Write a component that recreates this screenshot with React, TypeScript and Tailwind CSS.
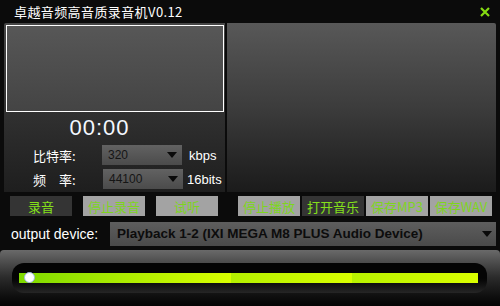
import React from "react";

const cjk = { fontFamily: '"Noto Sans CJK SC", "Noto Sans", sans-serif' };
const lib = { fontFamily: '"Liberation Sans", Arial, sans-serif' };

function Btn({ label, dark, className }: { label: string; dark?: boolean; className?: string }) {
  return (
    <div
      className={`h-[20px] w-[62px] flex items-center justify-center text-[13px] leading-none ${
        dark ? "bg-[#343434] text-[#84e01a]" : "bg-[#a3a3a3] text-[#7ed51e]"
      } ${className ?? ""}`}
      style={cjk}
    >
      {label}
    </div>
  );
}

function Select({ value }: { value: string }) {
  return (
    <div className="h-[20px] w-[80px] flex items-center justify-between pl-[6px] pr-[5px] bg-gradient-to-b from-[#626262] to-[#4b4b4b]">
      <span className="text-[12px] text-[#151515] leading-none" style={lib}>
        {value}
      </span>
      <svg width="10" height="6" viewBox="0 0 10 6">
        <polygon points="0,0 10,0 5,6" fill="#0a0a0a" />
      </svg>
    </div>
  );
}

export default function App() {
  return (
    <div className="w-[500px] h-[306px] bg-[#0b0b0b] flex flex-col overflow-hidden select-none">
      {/* title bar */}
      <div className="h-[23px] flex items-center justify-between pl-[14px] pr-[10px] shrink-0">
        <span className="text-white text-[13px] leading-none tracking-[0.4px]" style={cjk}>
          卓越音频高音质录音机V0.12
        </span>
        <svg width="10" height="10" viewBox="0 0 10 10">
          <path d="M1 1 L9 9 M9 1 L1 9" stroke="#86dc12" strokeWidth="2.2" />
        </svg>
      </div>

      {/* panels */}
      <div className="h-[169px] flex pl-[4px] pr-[4px] gap-[2px] shrink-0">
        <div className="w-[221px] flex flex-col bg-gradient-to-b from-[#474747] to-[#1e1e1e] rounded-tl-[2px]">
          <div className="mt-[2px] ml-[2px] w-[218px] h-[87px] border border-white bg-gradient-to-b from-[#575757] to-[#444444]" />
          <div
            className="mt-[3px] h-[26px] flex items-center justify-center pr-[30px] text-[22px] text-[#f4f8ff] leading-none"
            style={{ ...lib, letterSpacing: "1px" }}
          >
            00:00
          </div>
          <div className="mt-[4px] flex items-center h-[20px]">
            <span className="w-[98px] pl-[29px] text-white text-[13px] leading-none" style={cjk}>
              比特率:
            </span>
            <Select value="320" />
            <span className="ml-[7px] text-white text-[13px] leading-none" style={lib}>
              kbps
            </span>
          </div>
          <div className="mt-[4px] flex items-center h-[20px]">
            <span className="w-[99px] pl-[29px] text-white text-[13px] leading-none whitespace-pre" style={cjk}>
              频　率:
            </span>
            <Select value="44100" />
            <span className="ml-[4px] text-white text-[13px] leading-none" style={lib}>
              16bits
            </span>
          </div>
        </div>
        <div className="flex-1 bg-gradient-to-b from-[#585858] via-[#3c3c3c] to-[#1b1b1b] rounded-tr-[2px]" />
      </div>

      {/* buttons */}
      <div className="mt-[4px] h-[20px] flex pl-[10px] shrink-0">
        <Btn label="录音" dark />
        <Btn label="停止录音" className="ml-[11px]" />
        <Btn label="试听" className="ml-[11px]" />
        <Btn label="停止播放" className="ml-[20px]" />
        <Btn label="打开音乐" dark className="ml-[2px]" />
        <Btn label="保存MP3" className="ml-[2px]" />
        <Btn label="保存WAV" className="ml-[2px]" />
      </div>

      {/* output device */}
      <div className="mt-[6px] h-[24px] flex items-center pl-[11px] pr-[4px] shrink-0">
        <span className="w-[99px] text-white text-[14px] leading-none" style={lib}>
          output device:
        </span>
        <div className="flex-1 h-[24px] flex items-center justify-between pl-[7px] pr-[4px] bg-gradient-to-b from-[#5e5e5e] to-[#4a4a4a]">
          <span className="text-[13.5px] font-bold text-[#0c0c0c] leading-none" style={lib}>
            Playback 1-2 (IXI MEGA M8 PLUS Audio Device)
          </span>
          <svg width="10" height="6" viewBox="0 0 10 6">
            <polygon points="0,0 10,0 5,6" fill="#0a0a0a" />
          </svg>
        </div>
      </div>

      {/* progress area */}
      <div className="mt-[4px] flex-1 rounded-t-[4px] bg-gradient-to-b from-[#6a6a6a] via-[#2a2a2a] to-[#040404] px-[12px] pt-[13px]">
        <div className="h-[30px] w-[475px] rounded-[12px] bg-gradient-to-b from-[#040404] from-50% to-[#262626] flex items-center px-[7px] pb-[1px]">
          <div className="relative h-[10px] w-[459px] flex">
            <div className="w-[212px] h-full bg-gradient-to-r from-[#7ed900] to-[#d8ff00]" />
            <div className="w-[121px] h-full bg-gradient-to-r from-[#b4f000] to-[#d8ff00]" />
            <div className="flex-1 h-full bg-gradient-to-r from-[#b8f200] to-[#daff00]" />
            <div className="absolute left-[5px] top-[-1px] w-[11px] h-[11px] rounded-full bg-white border border-[#9bb4e0]" />
          </div>
        </div>
      </div>
    </div>
  );
}
